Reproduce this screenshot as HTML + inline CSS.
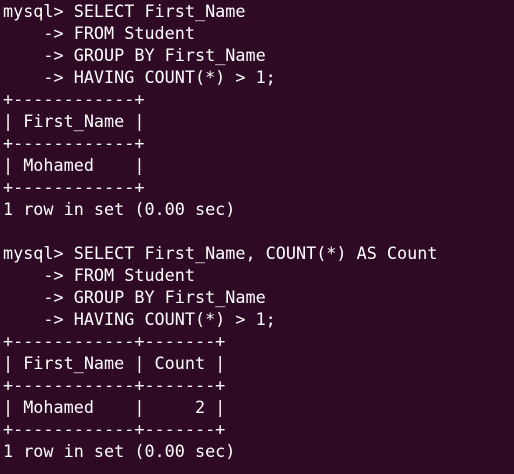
<html><head><style>
body{margin:0;background:#2f0a24;width:514px;height:474px;overflow:hidden}
pre{margin:0;position:absolute;left:3px;top:0px;font-family:"DejaVu Sans Mono","Liberation Mono",monospace;font-size:16.8px;line-height:22px;color:#fff}
</style></head><body><pre>mysql&gt; SELECT First_Name
    -&gt; FROM Student
    -&gt; GROUP BY First_Name
    -&gt; HAVING COUNT(*) &gt; 1;
+------------+
| First_Name |
+------------+
| Mohamed    |
+------------+
1 row in set (0.00 sec)

mysql&gt; SELECT First_Name, COUNT(*) AS Count
    -&gt; FROM Student
    -&gt; GROUP BY First_Name
    -&gt; HAVING COUNT(*) &gt; 1;
+------------+-------+
| First_Name | Count |
+------------+-------+
| Mohamed    |     2 |
+------------+-------+
1 row in set (0.00 sec)</pre></body></html>
